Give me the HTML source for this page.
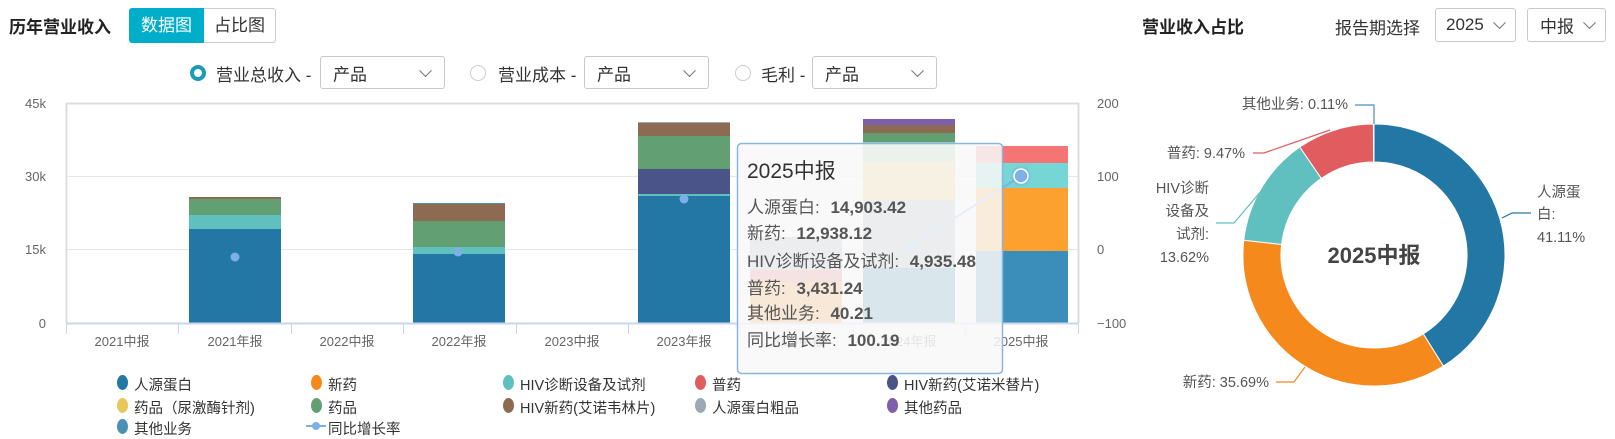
<!DOCTYPE html>
<html><head><meta charset="utf-8"><style>
*{margin:0;padding:0;box-sizing:border-box}
body{width:1615px;height:439px;background:#fff;font-family:"Liberation Sans","Noto Sans CJK SC",sans-serif;color:#333;position:relative;overflow:hidden}
.a{position:absolute;white-space:nowrap}
.sel{position:absolute;border:1px solid #c9c9c9;border-radius:3px;background:#fff;font-size:17px;color:#333}
.sel span{position:absolute;left:12px;top:50%;transform:translateY(-50%)}
.chev{position:absolute;right:14px;top:50%;width:9px;height:9px;border-right:1.3px solid #777;border-bottom:1.3px solid #777;transform:translateY(-75%) rotate(45deg)}
.radio{position:absolute;width:16px;height:16px;border-radius:50%;border:1px solid #ccc;background:#fff}
.lg{position:absolute;font-size:14.5px;color:#333;white-space:nowrap}
.lg i{position:absolute;left:-17px;top:1px;width:11px;height:15px;border-radius:50%}
</style></head><body>
<div class="a" style="left:9px;top:13px;font-size:17px;font-weight:bold;color:#222">历年营业收入</div>
<div class="a" style="left:129px;top:8px;width:75px;height:35px;background:#00aec9;color:#fff;font-size:17px;line-height:35px;text-align:center;border-radius:3px 0 0 3px">数据图</div>
<div class="a" style="left:204px;top:8px;width:72px;height:35px;border:1px solid #ccc;border-left:none;color:#333;font-size:17px;line-height:33px;text-align:center;border-radius:0 3px 3px 0">占比图</div>

<div class="radio" style="left:190px;top:65px;border:4px solid #1a9cb8"></div>
<div class="a" style="left:216px;top:61px;font-size:17px">营业总收入 -</div>
<div class="sel" style="left:320px;top:56px;width:125px;height:33px"><span>产品</span><div class="chev"></div></div>
<div class="radio" style="left:470px;top:65px"></div>
<div class="a" style="left:498px;top:61px;font-size:17px">营业成本 -</div>
<div class="sel" style="left:584px;top:56px;width:125px;height:33px"><span>产品</span><div class="chev"></div></div>
<div class="radio" style="left:735px;top:65px"></div>
<div class="a" style="left:761px;top:61px;font-size:17px">毛利 -</div>
<div class="sel" style="left:812px;top:56px;width:125px;height:33px"><span>产品</span><div class="chev"></div></div>

<svg class="a" style="left:0;top:0" width="1615" height="439" font-family="Liberation Sans, Noto Sans CJK SC, sans-serif">
<g stroke="#e6e6e6" stroke-width="1">
<line x1="66" y1="103.5" x2="1079" y2="103.5" stroke="#ddd" stroke-width="2"/>
<line x1="66" y1="176.5" x2="1079" y2="176.5"/>
<line x1="66" y1="249.5" x2="1079" y2="249.5"/>
<line x1="66.5" y1="103" x2="66.5" y2="323" stroke="#ddd" stroke-width="2"/>
<line x1="1078.5" y1="103" x2="1078.5" y2="323" stroke="#ddd" stroke-width="2"/>
</g>
<g font-size="13" fill="#666" text-anchor="end">
<text x="46" y="108">45k</text><text x="46" y="181">30k</text><text x="46" y="254">15k</text><text x="46" y="328">0</text>
</g>
<g font-size="13" fill="#666">
<text x="1097" y="108">200</text><text x="1097" y="181">100</text><text x="1097" y="254">0</text><text x="1097" y="328">−100</text>
</g>
<rect x="189" y="229" width="92" height="94" fill="#2277a4"/>
<rect x="189" y="215" width="92" height="14" fill="#60bfbf"/>
<rect x="189" y="199" width="92" height="16" fill="#62a073"/>
<rect x="189" y="197" width="92" height="2" fill="#8c6b52"/>
<rect x="413" y="254" width="92" height="69" fill="#2277a4"/>
<rect x="413" y="247" width="92" height="7" fill="#60bfbf"/>
<rect x="413" y="221" width="92" height="26" fill="#62a073"/>
<rect x="413" y="204" width="92" height="17" fill="#8c6b52"/>
<rect x="413" y="203" width="92" height="1" fill="#4a90b5"/>
<rect x="638" y="196" width="92" height="127" fill="#2277a4"/>
<rect x="638" y="194" width="92" height="2" fill="#60bfbf"/>
<rect x="638" y="169" width="92" height="25" fill="#4b5488"/>
<rect x="638" y="136" width="92" height="33" fill="#62a073"/>
<rect x="638" y="123" width="92" height="13" fill="#8c6b52"/>
<rect x="638" y="122" width="92" height="1" fill="#9ca8b4"/>
<rect x="750" y="282" width="92" height="41" fill="#f5891b"/>
<rect x="750" y="270" width="92" height="12" fill="#e05c5f"/>
<rect x="750" y="237" width="92" height="33" fill="#9ca8b4"/>
<rect x="863" y="268" width="92" height="55" fill="#2277a4"/>
<rect x="863" y="200" width="92" height="68" fill="#9ca8b4"/>
<rect x="863" y="162" width="92" height="38" fill="#e8c75a"/>
<rect x="863" y="142" width="92" height="20" fill="#9ccaa8"/>
<rect x="863" y="133" width="92" height="9" fill="#62a073"/>
<rect x="863" y="125" width="92" height="8" fill="#8c6b52"/>
<rect x="863" y="119" width="92" height="6" fill="#7d5fab"/>
<rect x="976" y="251" width="92" height="72" fill="#3b8eba"/>
<rect x="976" y="188" width="92" height="63" fill="#fca02f"/>
<rect x="976" y="163" width="92" height="25" fill="#76d5d5"/>
<rect x="976" y="146" width="92" height="17" fill="#f57474"/>
<line x1="66" y1="323.5" x2="1079" y2="323.5" stroke="#ccd6eb" stroke-width="2"/>
<g stroke="#ccd6eb"><line x1="66.5" y1="323" x2="66.5" y2="334"/><line x1="178.5" y1="323" x2="178.5" y2="334"/><line x1="291.5" y1="323" x2="291.5" y2="334"/><line x1="403.5" y1="323" x2="403.5" y2="334"/><line x1="516.5" y1="323" x2="516.5" y2="334"/><line x1="628.5" y1="323" x2="628.5" y2="334"/><line x1="740.5" y1="323" x2="740.5" y2="334"/><line x1="853.5" y1="323" x2="853.5" y2="334"/><line x1="965.5" y1="323" x2="965.5" y2="334"/><line x1="1078.5" y1="323" x2="1078.5" y2="334"/></g>
<g font-size="13" fill="#666" text-anchor="middle">
<text x="122" y="346">2021中报</text><text x="235" y="346">2021年报</text><text x="347" y="346">2022中报</text><text x="459" y="346">2022年报</text><text x="572" y="346">2023中报</text><text x="684" y="346">2023年报</text><text x="797" y="346">2024中报</text><text x="909" y="346">2024年报</text><text x="1021" y="346">2025中报</text>
</g>
<line x1="909" y1="247" x2="1021" y2="176" stroke="#7db0e6" stroke-width="2"/>
<g fill="#7db0e6"><circle cx="235" cy="257" r="4.5"/><circle cx="458" cy="252" r="4.5"/><circle cx="684" cy="199" r="4.5"/><circle cx="909" cy="247" r="4.5"/></g>
<rect x="737.5" y="143.5" width="265" height="230" rx="4" fill="rgba(248,248,248,0.86)" stroke="#8ab6e0" stroke-width="1.5"/>
<circle cx="1021" cy="176" r="10" fill="rgba(125,176,230,0.35)"/>
<circle cx="1021" cy="176" r="7" fill="#7db0e6" stroke="#fff" stroke-width="1.5"/>
<g fill="#333" font-size="21"><text x="747" y="178">2025中报</text></g>
<g fill="#555" font-size="17">
<text x="747" y="213">人源蛋白:  <tspan font-weight="bold" dx="6">14,903.42</tspan></text>
<text x="747" y="239">新药:  <tspan font-weight="bold" dx="6">12,938.12</tspan></text>
<text x="747" y="267">HIV诊断设备及试剂:  <tspan font-weight="bold" dx="6">4,935.48</tspan></text>
<text x="747" y="294">普药:  <tspan font-weight="bold" dx="6">3,431.24</tspan></text>
<text x="747" y="319">其他业务:  <tspan font-weight="bold" dx="6">40.21</tspan></text>
<text x="747" y="346">同比增长率:  <tspan font-weight="bold" dx="6">100.19</tspan></text>
</g>

<g stroke="#fff" stroke-width="1">
<path d="M1374,124 A131,131 0 0 1 1443.4,366.1 L1423.3,333.9 A93,93 0 0 0 1374,162 Z" fill="#2277a4"/>
<path d="M1443.4,366.1 A131,131 0 0 1 1243.8,240.2 L1281.6,244.5 A93,93 0 0 0 1423.3,333.9 Z" fill="#f5891b"/>
<path d="M1243.8,240.2 A131,131 0 0 1 1299.8,147 L1321.3,178.4 A93,93 0 0 0 1281.6,244.5 Z" fill="#60bfbf"/>
<path d="M1299.8,147 A131,131 0 0 1 1373.4,124 L1373.6,162 A93,93 0 0 0 1321.3,178.4 Z" fill="#e05c5f"/>
</g>
<g fill="none" stroke-width="1.2">
<polyline points="1374,124 1374,105 1355,105" stroke="#4a90b5"/>
<polyline points="1330,130 1264,153 1253,153" stroke="#e05c5f"/>
<polyline points="1262,190 1234,223 1216,223" stroke="#60bfbf"/>
<polyline points="1502,218 1512,213 1531,213" stroke="#2277a4"/>
<polyline points="1305,367 1294,382 1276,382" stroke="#f5891b"/>
</g>
<text x="1374" y="263" text-anchor="middle" font-size="22" font-weight="bold" fill="#444">2025中报</text>
<g font-size="14.5" fill="#555">
<text x="1348" y="109" text-anchor="end">其他业务: 0.11%</text>
<text x="1245" y="158" text-anchor="end">普药: 9.47%</text>
<text x="1209" y="193" text-anchor="end">HIV诊断</text>
<text x="1209" y="216" text-anchor="end">设备及</text>
<text x="1209" y="239" text-anchor="end">试剂:</text>
<text x="1209" y="262" text-anchor="end">13.62%</text>
<text x="1537" y="197">人源蛋</text>
<text x="1537" y="219">白:</text>
<text x="1537" y="242">41.11%</text>
<text x="1269" y="387" text-anchor="end">新药: 35.69%</text>
</g>
</svg>

<div class="lg" style="left:134px;top:374px"><i style="background:#2277a4"></i>人源蛋白</div>
<div class="lg" style="left:328px;top:374px"><i style="background:#f5891b"></i>新药</div>
<div class="lg" style="left:520px;top:374px"><i style="background:#60bfbf"></i>HIV诊断设备及试剂</div>
<div class="lg" style="left:712px;top:374px"><i style="background:#e05c5f"></i>普药</div>
<div class="lg" style="left:904px;top:374px"><i style="background:#4b5488"></i>HIV新药(艾诺米替片)</div>
<div class="lg" style="left:134px;top:397px"><i style="background:#e8c75a"></i>药品（尿激酶针剂)</div>
<div class="lg" style="left:328px;top:397px"><i style="background:#62a073"></i>药品</div>
<div class="lg" style="left:520px;top:397px"><i style="background:#8c6b52"></i>HIV新药(艾诺韦林片)</div>
<div class="lg" style="left:712px;top:397px"><i style="background:#9ca8b4"></i>人源蛋白粗品</div>
<div class="lg" style="left:904px;top:397px"><i style="background:#7d5fab"></i>其他药品</div>
<div class="lg" style="left:134px;top:418px"><i style="background:#4a90b5"></i>其他业务</div>
<div class="lg" style="left:328px;top:418px"><i style="background:none"><b style="position:absolute;left:-5px;top:6px;width:20px;height:2px;background:#7db0e6"></b><b style="position:absolute;left:1px;top:3px;width:8px;height:8px;border-radius:50%;background:#7db0e6"></b></i>同比增长率</div>

<div class="a" style="left:1142px;top:13px;font-size:17px;font-weight:bold;color:#222">营业收入占比</div>
<div class="a" style="left:1335px;top:14px;font-size:17px;color:#333">报告期选择</div>
<div class="sel" style="left:1435px;top:8px;width:81px;height:34px"><span style="left:10px">2025</span><div class="chev" style="right:11px"></div></div>
<div class="sel" style="left:1527px;top:8px;width:79px;height:34px"><span style="left:12px">中报</span><div class="chev" style="right:11px"></div></div>
</body></html>
